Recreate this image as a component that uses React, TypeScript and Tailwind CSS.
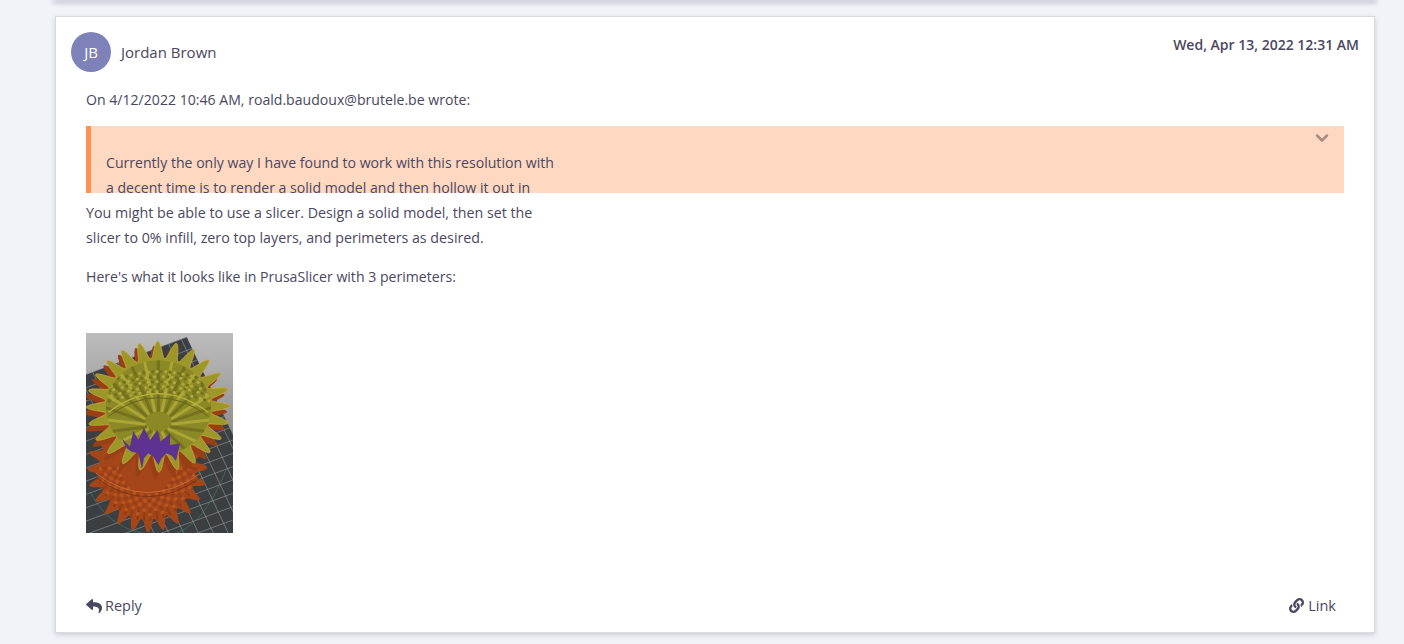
import React from 'react';
import { FaReply, FaLink } from 'react-icons/fa';
import { ChevronDown } from 'lucide-react';

// toothed ring: rounded fingers, like the rim of the print
function ring(cx: number, cy: number, rx: number, ry: number, n: number, inner: number, phase = 0) {
  const pts: string[] = [];
  for (let i = 0; i < 960; i++) {
    const a = (i / 960) * Math.PI * 2;
    const w = Math.pow((Math.cos(n * a + phase) + 1) / 2, 1.15);
    const r = inner + (1 - inner) * w;
    pts.push(`${(cx + Math.cos(a) * rx * r).toFixed(1)},${(cy + Math.sin(a) * ry * r).toFixed(1)}`);
  }
  return pts.join(' ');
}

function SlicerPreview() {
  const rows = [0, 1, 2, 3, 4];
  const seats = Array.from({ length: 24 }, (_, i) => i);
  const nums = Array.from({ length: 18 }, (_, i) => i);
  return (
    <svg viewBox="48 24 441 600" width="147" height="200" className="block">
      <defs>
        <linearGradient id="sky" x1="0" y1="0" x2="0" y2="1">
          <stop offset="0" stopColor="#bdbdbd" />
          <stop offset="0.55" stopColor="#8a8a8a" />
        </linearGradient>
        <clipPath id="plate">
          <polygon points="30,155 350,36 640,650 30,650" />
        </clipPath>
        <clipPath id="hollow">
          <ellipse cx="265" cy="248" rx="158" ry="142" />
        </clipPath>
      </defs>
      <rect x="48" y="24" width="441" height="600" fill="url(#sky)" />
      <polygon points="30,155 350,36 640,650 30,650" fill="#3c3f42" />
      <g clipPath="url(#plate)" stroke="#a9afaf" strokeWidth="1.5">
        {nums.map((i) => (
          <line key={`a${i}`} x1={30 + i * 38} y1={155 - i * 14} x2={330 + i * 38} y2={790 - i * 14} />
        ))}
        {nums.map((i) => (
          <line key={`b${i}`} x1={30} y1={155 + i * 40} x2={640} y2={-71 + i * 40} />
        ))}
      </g>
      <path d="M60 500Q130 640 300 630Q400 610 470 430" fill="none" stroke="#3f8f82" strokeWidth="1.5" />

      {/* base */}
      <polygon points={ring(232, 430, 180, 192, 24, 0.8, 0.3)} fill="#a4461a" />
      {seats.map((s) => {
        const a = 0.02 + (s / 23) * 3.1;
        return (
          <line
            key={s}
            x1={232 + Math.cos(a) * 122}
            y1={425 + Math.sin(a) * 128}
            x2={232 + Math.cos(a) * 150}
            y2={428 + Math.sin(a) * 158}
            stroke="#8a3812"
            strokeWidth="5"
          />
        );
      })}
      {rows.map((r) =>
        seats.map((s) => {
          const a = 0.05 + (s / 23) * 3.05;
          const k = 0.5 + r * 0.08;
          return (
            <circle
              key={`${r}-${s}`}
              cx={232 + Math.cos(a) * 172 * k}
              cy={425 + Math.sin(a) * 176 * k}
              r="6"
              fill={(r + s) % 2 ? '#b8541f' : '#96401a'}
            />
          );
        })
      )}
      <path d="M78 445Q230 560 392 445" fill="none" stroke="#c76a35" strokeWidth="3" />
      <path d="M78 458Q230 572 392 458" fill="none" stroke="#7f3210" strokeWidth="3" />

      {/* rim */}
      <polygon points={ring(255, 262, 216, 200, 24, 0.74, 0.2)} fill="#974015" />
      <polygon points={ring(265, 245, 216, 196, 24, 0.74, 0.2)} fill="#9b9729" stroke="#d3a345" strokeWidth="2.5" strokeLinejoin="round" />

      {/* inner wall */}
      <g clipPath="url(#hollow)">
        <ellipse cx="265" cy="248" rx="158" ry="142" fill="#8b8826" />
        {seats.map((s) => {
          const a = (s / 24) * Math.PI * 2;
          return (
            <line
              key={s}
              x1={265 + Math.cos(a) * 40}
              y1={290 + Math.sin(a) * 30}
              x2={265 + Math.cos(a) * 158}
              y2={248 + Math.sin(a) * 142}
              stroke={s % 2 ? '#aaa635' : '#74711f'}
              strokeWidth="9"
            />
          );
        })}
        {rows.map((r) =>
          seats.map((s) => (
            <circle
              key={`w${r}-${s}`}
              cx={118 + s * 13 + (r % 2) * 6}
              cy={168 + r * 15 - Math.sin((s / 23) * Math.PI) * 28}
              r="5"
              fill={(r + s) % 2 ? '#aeaa38' : '#74711f'}
            />
          ))
        )}
        <path d="M115 262Q265 150 415 262" fill="none" stroke="#bab43f" strokeWidth="4" />
        <path d="M115 274Q265 162 415 274" fill="none" stroke="#66631f" strokeWidth="3" />
      </g>

      {/* hollow */}
      <polygon
        points="155,340 180,365 190,318 205,345 222,308 240,345 262,315 272,350 300,325 300,360 330,355 318,408 305,392 290,385 275,400 265,420 250,395 235,385 222,400 216,432 205,385 185,380 170,370"
        fill="#5d3290"
      />
    </svg>
  );
}

export default function App() {
  return (
    <div className="flex h-[644px] flex-col overflow-hidden bg-[#f1f3f9] font-['Open_Sans','Liberation_Sans',sans-serif] text-[14.1px] text-[#4a4760]">
      <div className="ml-[55px] flex w-[1320px] flex-col">
        <div className="h-0 shadow-[0_1px_5px_2px_rgba(60,60,80,0.28)]" />
        <article className="mt-4 flex h-[617px] flex-col border border-[#d9d9de] bg-white pl-[15px] pr-[15px] pt-[15px] shadow-[0_2px_5px_rgba(60,60,80,0.2)]">
          <header className="flex justify-between">
            <div className="flex items-center gap-[10px]">
              <div className="flex h-10 w-10 items-center justify-center rounded-full bg-[#7f82b8] text-[15px] text-white">JB</div>
              <span className="text-[15px] font-medium">Jordan Brown</span>
            </div>
            <time className="text-[14px] font-semibold leading-[25px]">Wed, Apr 13, 2022 12:31 AM</time>
          </header>

          <div className="mx-[15px] mt-[15px] leading-[25px]">
            <p>On 4/12/2022 10:46 AM, roald.baudoux@brutele.be wrote:</p>
            <blockquote className="relative mt-[14px] h-[67px] overflow-hidden border-l-[5px] border-[#ff9152] bg-[#ffd8c2] pl-[15px] pt-6">
              <p>
                Currently the only way I have found to work with this resolution with
                <br />
                a decent time is to render a solid model and then hollow it out in
              </p>
              <ChevronDown size={20} strokeWidth={3} className="absolute right-[12px] top-[2px] text-[#a98c84]" />
            </blockquote>
            <p className="mt-[7px] text-[14.25px]">
              You might be able to use a slicer. Design a solid model, then set the
              <br />
              slicer to 0% infill, zero top layers, and perimeters as desired.
            </p>
            <p className="mt-[14px]">Here's what it looks like in PrusaSlicer with 3 perimeters:</p>
            <div className="mt-[44px]">
              <SlicerPreview />
            </div>
          </div>

          <footer className="mx-[15px] mb-[14px] mt-auto flex justify-between pr-[8px] text-[14.5px] font-medium leading-[25px]">
            <button className="flex items-center gap-[3px] font-medium">
              <FaReply size={16} /> Reply
            </button>
            <button className="flex items-center gap-1 font-medium">
              <FaLink size={15} /> Link
            </button>
          </footer>
        </article>
      </div>
    </div>
  );
}
